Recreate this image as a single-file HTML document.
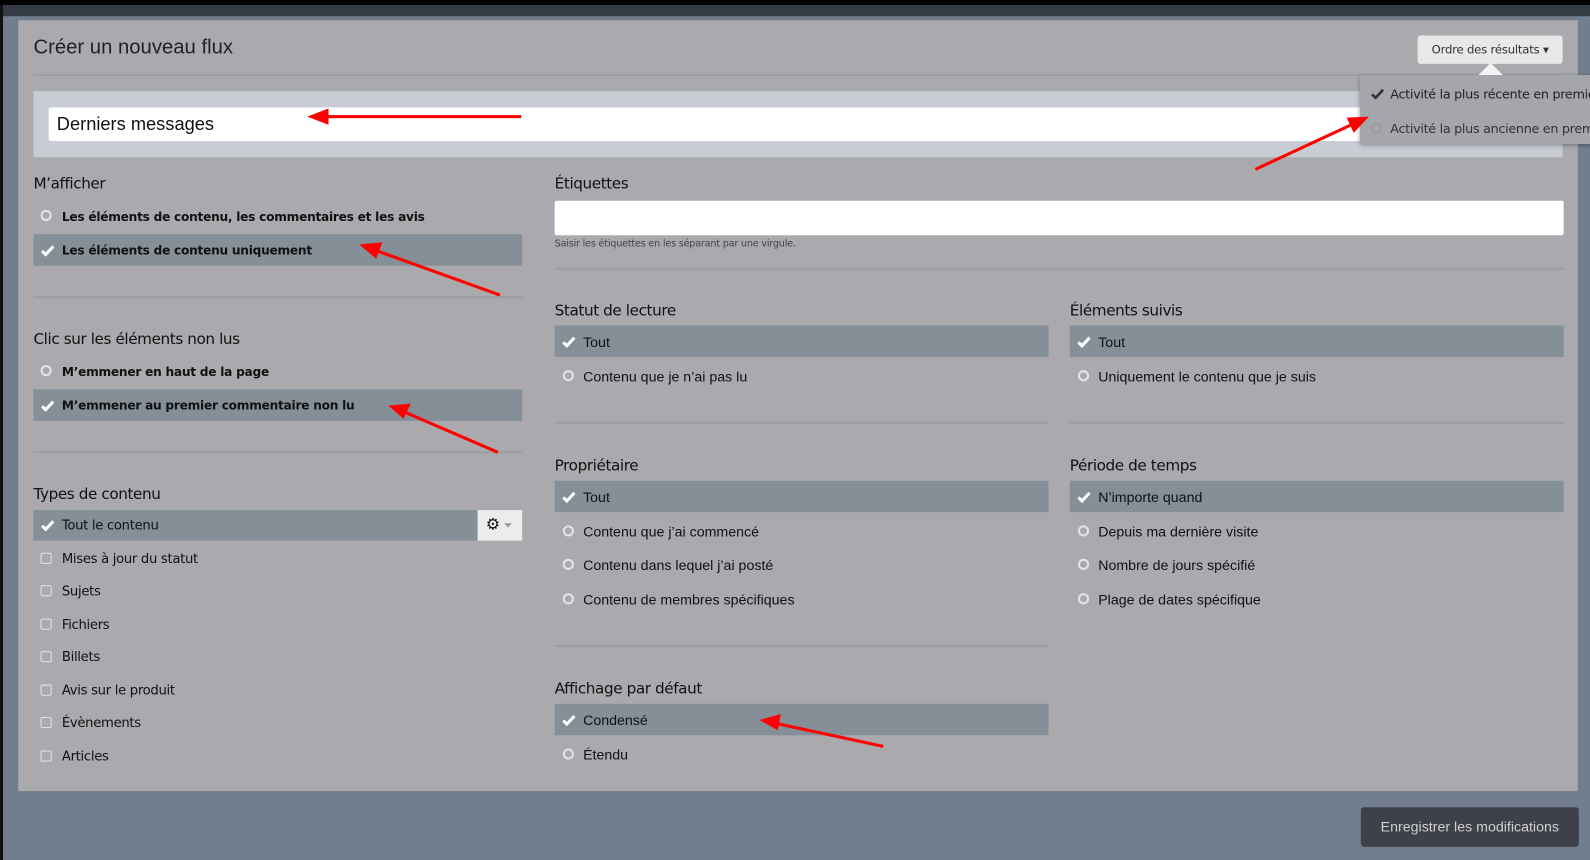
<!DOCTYPE html>
<html><head><meta charset="utf-8"><style>
*{margin:0;padding:0;box-sizing:border-box}
html,body{width:1590px;height:860px;overflow:hidden;background:#727e8d}
#w{position:absolute;left:0;top:0;width:1568px;height:848px;transform:scale(1.01403,1.01415);transform-origin:0 0;background:#727e8d;font-family:"Liberation Sans",sans-serif;color:#1a1a1a}
.a{position:absolute}
.h{position:absolute;font-family:"DejaVu Sans",sans-serif;font-size:15px;color:#111;letter-spacing:-0.4px}
.row{position:absolute;height:31px;background:#858f98}
.opt{position:absolute;font-size:14px;color:#111;line-height:16px;white-space:nowrap}
.b{font-family:"DejaVu Sans",sans-serif;font-weight:bold;font-size:12px;letter-spacing:-0.25px}
.u{font-family:"DejaVu Sans",sans-serif;font-size:13px;letter-spacing:-0.3px}
.rad{position:absolute;width:11px;height:11px;border:2px solid #e4e4e4;border-radius:50%}
.cb{position:absolute;width:11px;height:11px;border:1.5px solid #e4e4e4;border-radius:2px}
.ck{position:absolute;width:14px;height:12px}
.hr{position:absolute;height:2px;background:#9e9da3}
</style></head><body><div id="w">
<div class="a" style="left:0;top:0;width:1568px;height:5px;background:#000"></div>
<div class="a" style="left:0;top:5px;width:1568px;height:11px;background:#363c45"></div>
<div class="a" style="left:0;top:5px;width:3px;height:843px;background:#111"></div>
<div class="a" style="left:18px;top:20px;width:1538px;height:760px;background:#aaa9ae"></div>

<div class="a" style="left:33px;top:36px;font-size:20px;color:#222">Créer un nouveau flux</div>
<div class="hr" style="left:33px;top:73px;width:1508px"></div>
<div class="a" style="left:33px;top:90px;width:1508px;height:65px;background:#c8ccd4"></div>
<div class="a" style="left:48px;top:106px;width:1480px;height:33px;background:#fff;border-radius:2px"></div>
<div class="a" style="left:56px;top:112px;font-size:18px;color:#111">Derniers messages</div>

<div class="a" style="left:1398px;top:35px;width:143px;height:28px;background:#e8e8e8;border-radius:3px;font-family:'DejaVu Sans',sans-serif;font-size:11.5px;color:#333;line-height:28px;text-align:center;letter-spacing:-0.2px">Ordre des résultats ▾</div>
<div class="a" style="left:1341px;top:74px;width:240px;height:68px;background:#a5a6aa;box-shadow:0 1px 4px rgba(0,0,0,.3);border-radius:3px 0 0 3px"></div>
<div class="a" style="left:1458px;top:62px;width:0;height:0;border-left:12px solid transparent;border-right:12px solid transparent;border-bottom:12px solid #f4f4f4"></div>
<svg class="a" style="left:1352px;top:87px" width="13" height="11" viewBox="0 0 13 11"><path d="M1 6l3.5 3.5L12 1.5" stroke="#333" stroke-width="2.6" fill="none"/></svg>
<div class="a u" style="left:1371px;top:85px;color:#222;white-space:nowrap;font-size:12.6px">Activité la plus récente en premièr</div>
<div class="rad" style="left:1352px;top:121px;border-color:#9c9da1"></div>
<div class="a u" style="left:1371px;top:119px;color:#333;white-space:nowrap;font-size:12.6px">Activité la plus ancienne en premi</div>

<div class="h" style="left:33px;top:172px">M’afficher</div>
<div class="rad" style="left:40px;top:207px"></div>
<div class="opt b" style="left:61px;top:206px">Les éléments de contenu, les commentaires et les avis</div>
<div class="row" style="left:33px;top:231px;width:482px"></div>
<svg class="ck" style="left:40px;top:241px" viewBox="0 0 14 12"><path d="M1.5 6.5l3.5 3.5L12.5 2" stroke="#fff" stroke-width="3" fill="none"/></svg>
<div class="opt b" style="left:61px;top:239px">Les éléments de contenu uniquement</div>
<div class="hr" style="left:33px;top:292px;width:482px"></div>

<div class="h" style="left:33px;top:325px">Clic sur les éléments non lus</div>
<div class="rad" style="left:40px;top:360px"></div>
<div class="opt b" style="left:61px;top:359px">M’emmener en haut de la page</div>
<div class="row" style="left:33px;top:384px;width:482px"></div>
<svg class="ck" style="left:40px;top:394px" viewBox="0 0 14 12"><path d="M1.5 6.5l3.5 3.5L12.5 2" stroke="#fff" stroke-width="3" fill="none"/></svg>
<div class="opt b" style="left:61px;top:392px">M’emmener au premier commentaire non lu</div>
<div class="hr" style="left:33px;top:445px;width:482px"></div>

<div class="h" style="left:33px;top:478px">Types de contenu</div>
<div class="row" style="left:33px;top:503px;width:438px;height:30px"></div>
<div class="a" style="left:471px;top:503px;width:44px;height:30px;background:#ececec"></div>
<div class="a" style="left:479px;top:507px;font-size:16px;color:#111">⚙</div>
<div class="a" style="left:497px;top:516px;border-left:4px solid transparent;border-right:4px solid transparent;border-top:4px solid #999"></div>
<svg class="ck" style="left:40px;top:512px" viewBox="0 0 14 12"><path d="M1.5 6.5l3.5 3.5L12.5 2" stroke="#fff" stroke-width="3" fill="none"/></svg>
<div class="opt u" style="left:61px;top:511px">Tout le contenu</div>
<div class="cb" style="left:40px;top:545px"></div><div class="opt u" style="left:61px;top:544px">Mises à jour du statut</div>
<div class="cb" style="left:40px;top:577px"></div><div class="opt u" style="left:61px;top:576px">Sujets</div>
<div class="cb" style="left:40px;top:610px"></div><div class="opt u" style="left:61px;top:609px">Fichiers</div>
<div class="cb" style="left:40px;top:642px"></div><div class="opt u" style="left:61px;top:641px">Billets</div>
<div class="cb" style="left:40px;top:675px"></div><div class="opt u" style="left:61px;top:674px">Avis sur le produit</div>
<div class="cb" style="left:40px;top:707px"></div><div class="opt u" style="left:61px;top:706px">Évènements</div>
<div class="cb" style="left:40px;top:740px"></div><div class="opt u" style="left:61px;top:739px">Articles</div>

<div class="h" style="left:547px;top:172px">Étiquettes</div>
<div class="a" style="left:547px;top:198px;width:995px;height:34px;background:#fff;border-radius:2px"></div>
<div class="a" style="left:547px;top:235px;font-family:'DejaVu Sans',sans-serif;font-size:9.5px;color:#444;letter-spacing:-0.2px">Saisir les étiquettes en les séparant par une virgule.</div>
<div class="hr" style="left:547px;top:264px;width:995px"></div>

<div class="h" style="left:547px;top:297px">Statut de lecture</div>
<div class="row" style="left:547px;top:321px;width:487px"></div>
<svg class="ck" style="left:554px;top:331px" viewBox="0 0 14 12"><path d="M1.5 6.5l3.5 3.5L12.5 2" stroke="#fff" stroke-width="3" fill="none"/></svg>
<div class="opt" style="left:575px;top:329px">Tout</div>
<div class="rad" style="left:555px;top:365px"></div><div class="opt" style="left:575px;top:363px">Contenu que je n’ai pas lu</div>

<div class="h" style="left:1055px;top:297px">Éléments suivis</div>
<div class="row" style="left:1055px;top:321px;width:487px"></div>
<svg class="ck" style="left:1062px;top:331px" viewBox="0 0 14 12"><path d="M1.5 6.5l3.5 3.5L12.5 2" stroke="#fff" stroke-width="3" fill="none"/></svg>
<div class="opt" style="left:1083px;top:329px">Tout</div>
<div class="rad" style="left:1063px;top:365px"></div><div class="opt" style="left:1083px;top:363px">Uniquement le contenu que je suis</div>

<div class="hr" style="left:547px;top:416px;width:487px"></div>
<div class="hr" style="left:1055px;top:416px;width:487px"></div>

<div class="h" style="left:547px;top:450px">Propriétaire</div>
<div class="row" style="left:547px;top:474px;width:487px"></div>
<svg class="ck" style="left:554px;top:484px" viewBox="0 0 14 12"><path d="M1.5 6.5l3.5 3.5L12.5 2" stroke="#fff" stroke-width="3" fill="none"/></svg>
<div class="opt" style="left:575px;top:482px">Tout</div>
<div class="rad" style="left:555px;top:518px"></div><div class="opt" style="left:575px;top:516px">Contenu que j’ai commencé</div>
<div class="rad" style="left:555px;top:551px"></div><div class="opt" style="left:575px;top:549px">Contenu dans lequel j’ai posté</div>
<div class="rad" style="left:555px;top:585px"></div><div class="opt" style="left:575px;top:583px">Contenu de membres spécifiques</div>

<div class="h" style="left:1055px;top:450px">Période de temps</div>
<div class="row" style="left:1055px;top:474px;width:487px"></div>
<svg class="ck" style="left:1062px;top:484px" viewBox="0 0 14 12"><path d="M1.5 6.5l3.5 3.5L12.5 2" stroke="#fff" stroke-width="3" fill="none"/></svg>
<div class="opt" style="left:1083px;top:482px">N’importe quand</div>
<div class="rad" style="left:1063px;top:518px"></div><div class="opt" style="left:1083px;top:516px">Depuis ma dernière visite</div>
<div class="rad" style="left:1063px;top:551px"></div><div class="opt" style="left:1083px;top:549px">Nombre de jours spécifié</div>
<div class="rad" style="left:1063px;top:585px"></div><div class="opt" style="left:1083px;top:583px">Plage de dates spécifique</div>

<div class="hr" style="left:547px;top:636px;width:487px"></div>
<div class="h" style="left:547px;top:670px">Affichage par défaut</div>
<div class="row" style="left:547px;top:694px;width:487px"></div>
<svg class="ck" style="left:554px;top:704px" viewBox="0 0 14 12"><path d="M1.5 6.5l3.5 3.5L12.5 2" stroke="#fff" stroke-width="3" fill="none"/></svg>
<div class="opt" style="left:575px;top:702px">Condensé</div>
<div class="rad" style="left:555px;top:738px"></div><div class="opt" style="left:575px;top:736px">Étendu</div>

<div class="a" style="left:1342px;top:796px;width:215px;height:39px;background:#3e4149;border-radius:3px;color:#d0d0d0;font-size:14px;line-height:39px;text-align:center">Enregistrer les modifications</div>

<svg class="a" style="left:0;top:0" width="1568" height="848">
<g stroke="#f00" stroke-width="3" fill="#f00">
<line x1="514" y1="115" x2="318" y2="115"/><polygon points="303,115 324,107 324,123" stroke="none"/>
<line x1="493" y1="291" x2="368" y2="246"/><polygon points="354,241 377,239 371,255" stroke="none"/>
<line x1="491" y1="446" x2="396" y2="405"/><polygon points="383,400 405,398 398,413" stroke="none"/>
<line x1="871" y1="736" x2="764" y2="713"/><polygon points="749,710 770,704 767,720" stroke="none"/>
<line x1="1238" y1="167" x2="1337" y2="121"/><polygon points="1350,115 1335,131 1328,116" stroke="none"/>
</g></svg>
</div></body></html>
